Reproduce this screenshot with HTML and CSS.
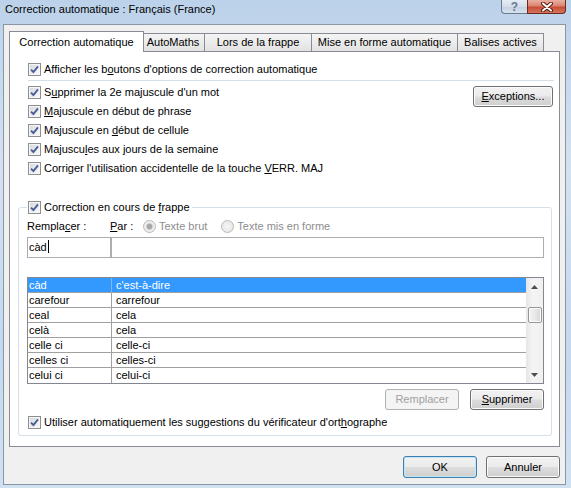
FILE: index.html
```html
<!DOCTYPE html>
<html lang="fr">

<head>
    <meta charset="UTF-8">
    <title>Correction automatique : Français (France)</title>
    <link rel="stylesheet" href="styles.css">
</head>

<body>
    <div class="frame">
        <!-- barre de titre -->
        <div class="titlebar">
            <span class="title">Correction automatique : Français (France)</span>
            <div class="caption">
                <span class="cap-help">?</span>
                <span class="cap-close">
                    <svg width="12" height="10" viewBox="0 0 12 10">
                        <path d="M2 1.5 L10 8.5 M10 1.5 L2 8.5" stroke="#5a1c12" stroke-width="4" stroke-linecap="round" />
                        <path d="M2 1.5 L10 8.5 M10 1.5 L2 8.5" stroke="#fff" stroke-width="2" stroke-linecap="round" />
                    </svg>
                </span>
            </div>
        </div>

        <div class="client">
            <!-- onglets -->
            <ul class="tabs">
                <li class="tab t1 active">Correction automatique</li>
                <li class="tab t2">AutoMaths</li>
                <li class="tab t3">Lors de la frappe</li>
                <li class="tab t4">Mise en forme automatique</li>
                <li class="tab t5">Balises actives</li>
            </ul>

            <div class="panel">
                <div class="chk-row first">
                    <span class="cb"><svg width="9" height="9" viewBox="0 0 9 9"><path d="M1 4.6 L3.4 7 L8 1.4" fill="none" stroke="#4b5e94" stroke-width="1.9" /></svg></span>
                    <span>Afficher les b<u>o</u>utons d'options de correction automatique</span>
                </div>
                <div class="sep"></div>

                <div class="opts">
                    <div class="opts-list">
                        <div class="chk-row">
                            <span class="cb"><svg width="9" height="9" viewBox="0 0 9 9"><path d="M1 4.6 L3.4 7 L8 1.4" fill="none" stroke="#4b5e94" stroke-width="1.9" /></svg></span>
                            <span>S<u>u</u>pprimer la 2e majuscule d'un mot</span>
                        </div>
                        <div class="chk-row">
                            <span class="cb"><svg width="9" height="9" viewBox="0 0 9 9"><path d="M1 4.6 L3.4 7 L8 1.4" fill="none" stroke="#4b5e94" stroke-width="1.9" /></svg></span>
                            <span><u>M</u>ajuscule en début de phrase</span>
                        </div>
                        <div class="chk-row">
                            <span class="cb"><svg width="9" height="9" viewBox="0 0 9 9"><path d="M1 4.6 L3.4 7 L8 1.4" fill="none" stroke="#4b5e94" stroke-width="1.9" /></svg></span>
                            <span>Majuscule en <u>d</u>ébut de cellule</span>
                        </div>
                        <div class="chk-row">
                            <span class="cb"><svg width="9" height="9" viewBox="0 0 9 9"><path d="M1 4.6 L3.4 7 L8 1.4" fill="none" stroke="#4b5e94" stroke-width="1.9" /></svg></span>
                            <span>Majuscu<u>l</u>es aux jours de la semaine</span>
                        </div>
                        <div class="chk-row">
                            <span class="cb"><svg width="9" height="9" viewBox="0 0 9 9"><path d="M1 4.6 L3.4 7 L8 1.4" fill="none" stroke="#4b5e94" stroke-width="1.9" /></svg></span>
                            <span>Corriger l'utilisation accidentelle de la touche <u>V</u>ERR. MAJ</span>
                        </div>
                    </div>
                    <button class="btn btn-exc"><u>E</u>xceptions...</button>
                </div>

                <!-- correction en cours de frappe -->
                <fieldset class="group">
                    <legend class="legend">
                        <span class="cb"><svg width="9" height="9" viewBox="0 0 9 9"><path d="M1 4.6 L3.4 7 L8 1.4" fill="none" stroke="#4b5e94" stroke-width="1.9" /></svg></span>
                        <span>Correction en cours de <u>f</u>rappe</span>
                    </legend>

                    <div class="par-row">
                        <span class="lbl-rep">Rempla<u>c</u>er :</span>
                        <span class="lbl-par"><u>P</u>ar :</span>
                        <span class="radio on"></span>
                        <span class="dis">Texte brut</span>
                        <span class="radio r2"></span>
                        <span class="dis">Texte mis en forme</span>
                    </div>

                    <div class="inputs">
                        <div class="inp inp-rep">càd<span class="caret"></span></div>
                        <div class="inp inp-par"></div>
                    </div>

                    <div class="list">
                        <div class="rows">
                            <div class="lrow sel"><span class="c1">càd</span><span class="c2">c'est-à-dire</span></div>
                            <div class="lrow"><span class="c1">carefour</span><span class="c2">carrefour</span></div>
                            <div class="lrow"><span class="c1">ceal</span><span class="c2">cela</span></div>
                            <div class="lrow"><span class="c1">celà</span><span class="c2">cela</span></div>
                            <div class="lrow"><span class="c1">celle ci</span><span class="c2">celle-ci</span></div>
                            <div class="lrow"><span class="c1">celles ci</span><span class="c2">celles-ci</span></div>
                            <div class="lrow"><span class="c1">celui ci</span><span class="c2">celui-ci</span></div>
                        </div>
                        <div class="vscroll">
                            <span class="arr"><svg width="7" height="4" viewBox="0 0 7 4"><path d="M0 4 L3.5 0 L7 4 Z" fill="#4d4d4d" /></svg></span>
                            <span class="thumb"></span>
                            <span class="arr down"><svg width="7" height="4" viewBox="0 0 7 4"><path d="M0 0 L3.5 4 L7 0 Z" fill="#4d4d4d" /></svg></span>
                        </div>
                    </div>

                    <div class="list-btns">
                        <button class="btn" disabled>Remplacer</button>
                        <button class="btn"><u>S</u>upprimer</button>
                    </div>

                    <div class="chk-row last">
                        <span class="cb"><svg width="9" height="9" viewBox="0 0 9 9"><path d="M1 4.6 L3.4 7 L8 1.4" fill="none" stroke="#4b5e94" stroke-width="1.9" /></svg></span>
                        <span>Utiliser automatiquement les suggestions du vérificateur d'ort<u>h</u>ographe</span>
                    </div>
                </fieldset>
            </div>

            <div class="footer">
                <button class="btn default">OK</button>
                <button class="btn">Annuler</button>
            </div>
        </div>
    </div>
</body>

</html>
```

FILE: styles.css
```css
* {
    margin: 0;
    padding: 0;
    box-sizing: border-box;
}

body {
    width: 571px;
    height: 488px;
    overflow: hidden;
    font: 11px/19px "Liberation Sans", Arial, sans-serif;
    color: #000;
}

.frame {
    height: 488px;
    display: flex;
    flex-direction: column;
    background: linear-gradient(180deg, #bcd2ea 0%, #d3e2f2 35%, #c4d8ee 70%, #d0e1f2 100%);
}

/* barre de titre */
.titlebar {
    height: 24px;
    display: flex;
    align-items: flex-start;
    padding-left: 5px;
}

.title {
    line-height: 19px;
}

.caption {
    margin-left: auto;
    margin-right: 5px;
    display: flex;
}

.cap-help,
.cap-close {
    height: 14px;
    display: flex;
    align-items: center;
    justify-content: center;
    border: 1px solid #6a7b90;
    border-top: 0;
}

.cap-help {
    width: 26px;
    border-right: 0;
    border-bottom-left-radius: 4px;
    background: linear-gradient(180deg, #e4ecf5 0%, #d4dfeb 50%, #c3d1e1 51%, #d6e2ef 100%);
    color: #687a90;
    font-weight: bold;
    font-size: 12px;
    line-height: 12px;
}

.cap-close {
    width: 39px;
    border-color: #6b2b20;
    border-bottom-right-radius: 4px;
    background: linear-gradient(180deg, #eab0a2 0%, #dc8470 45%, #c84e36 55%, #d4745c 100%);
}

/* zone cliente */
.client {
    flex: 1;
    margin: 0 5px 3px 3px;
    padding: 6px 5px 0 5px;
    background: #f0f0f0;
    border: 1px solid #8a96a4;
    display: flex;
    flex-direction: column;
}

.tabs {
    display: flex;
    height: 20px;
    padding-left: 2px;
    list-style: none;
}

.tab {
    height: 18px;
    margin-top: 2px;
    margin-left: -1px;
    border: 1px solid #898c95;
    border-bottom: 0;
    background: linear-gradient(180deg, #f4f4f4 0%, #ececec 50%, #e2e2e2 100%);
    line-height: 17px;
    text-align: center;
}

.tab.t1 { width: 131px; margin-left: 0; }
.tab.t2 { width: 64px; }
.tab.t3 { width: 108px; }
.tab.t4 { width: 147px; }
.tab.t5 { width: 87px; }

.tab.active {
    position: relative;
    z-index: 2;
    width: 135px;
    height: 21px;
    margin: 0 -2px 0 -2px;
    background: #fff;
    line-height: 20px;
}

.panel {
    height: 396px;
    border: 1px solid #898c95;
    background: #fff;
    padding-top: 8px;
}

.chk-row {
    display: flex;
    align-items: center;
    height: 19px;
    padding-left: 18px;
    white-space: nowrap;
}

.cb {
    width: 13px;
    height: 13px;
    margin-right: 3px;
    flex: none;
    display: flex;
    align-items: center;
    justify-content: center;
    border: 1px solid #8e8f8f;
    background: linear-gradient(135deg, #d2d6dc 0%, #eceef0 60%, #fafafa 100%);
    box-shadow: inset 0 0 0 1px #f6f6f6;
}

.sep {
    height: 1px;
    margin: 1px 5px 0 18px;
    background: #d5dfe5;
}

.opts {
    display: flex;
    margin-top: 2px;
}

.opts-list {
    flex: 1;
}

/* boutons */
.btn {
    width: 74px;
    height: 21px;
    font: inherit;
    color: #000;
    border: 1px solid #707070;
    border-radius: 3px;
    background: linear-gradient(180deg, #f2f2f2 0%, #ebebeb 49%, #dddddd 51%, #cfcfcf 100%);
    box-shadow: inset 0 0 0 1px #fbfbfb;
}

.btn-exc {
    width: 80px;
    margin: 3px 6px 0 0;
}

.btn:disabled {
    color: #a0a0a0;
    border-color: #adb2b5;
    background: #f4f4f4;
    box-shadow: none;
}

.btn.default {
    border-color: #3c7fb1;
    box-shadow: inset 0 0 0 1px #c4e5f6;
}

/* groupe */
.group {
    margin: 20px 7px 0 8px;
    padding: 0 7px 3px 8px;
    border: 1px solid #d5dfe5;
    border-radius: 3px;
}

.legend {
    display: flex;
    align-items: center;
    height: 19px;
    padding: 0 2px 0 1px;
}

.par-row {
    display: flex;
    align-items: center;
    height: 19px;
}

.lbl-rep {
    width: 83px;
}

.lbl-par {
    width: 33px;
}

.radio {
    width: 13px;
    height: 13px;
    margin-right: 3px;
    border-radius: 50%;
    border: 1px solid #b9b9b9;
    background: radial-gradient(circle, #f6f6f6 0, #e2e2e2 100%);
}

.radio.on {
    background: radial-gradient(circle, #a9a9a9 0, #a9a9a9 2.5px, #dadada 3.2px, #f2f2f2 4.5px, #e4e4e4 100%);
}

.radio.r2 {
    margin-left: 14px;
}

.dis {
    color: #8d8d8d;
}

.inputs {
    display: flex;
    height: 21px;
    margin-top: 1px;
}

.inp {
    border: 1px solid #abadb3;
    background: #fff;
    line-height: 19px;
    padding-left: 1px;
}

.inp-rep {
    width: 84px;
}

.inp-par {
    flex: 1;
}

.caret {
    display: inline-block;
    width: 1px;
    height: 13px;
    margin-left: 1px;
    background: #000;
    vertical-align: -2px;
}

/* liste */
.list {
    display: flex;
    height: 107px;
    margin-top: 19px;
    border: 1px solid #828790;
    background: #fff;
}

.rows {
    flex: 1;
}

.lrow {
    display: flex;
    height: 15px;
    line-height: 15px;
    border-bottom: 1px solid #a0a0a0;
    white-space: nowrap;
}

.lrow:last-child {
    border-bottom: 0;
}

.lrow.sel {
    background: #3399ff;
    color: #fff;
}

.c1 {
    width: 84px;
    padding-left: 1px;
    border-right: 1px solid #a0a0a0;
}

.lrow.sel .c1 {
    border-right-color: #7ab8f5;
}

.c2 {
    padding-left: 4px;
}

.vscroll {
    width: 17px;
    display: flex;
    flex-direction: column;
    align-items: center;
    background: linear-gradient(90deg, #e6e6e6 0%, #f4f4f4 40%, #f0f0f0 100%);
}

.arr {
    width: 17px;
    height: 17px;
    display: flex;
    align-items: center;
    justify-content: center;
}

.arr.down {
    margin-top: auto;
}

.thumb {
    width: 14px;
    height: 16px;
    margin-top: 12px;
    border: 1px solid #979797;
    border-radius: 2px;
    background: linear-gradient(90deg, #f4f4f4 0%, #e8e8e8 50%, #d6d6d6 100%);
    box-shadow: inset 0 0 0 1px #fbfbfb;
}

.list-btns {
    display: flex;
    justify-content: flex-end;
    gap: 11px;
    margin-top: 5px;
}

.chk-row.last {
    margin-top: 3px;
    padding-left: 1px;
}

.footer {
    display: flex;
    justify-content: flex-end;
    gap: 9px;
    margin-top: 9px;
}

.footer .btn {
    height: 22px;
}
```
